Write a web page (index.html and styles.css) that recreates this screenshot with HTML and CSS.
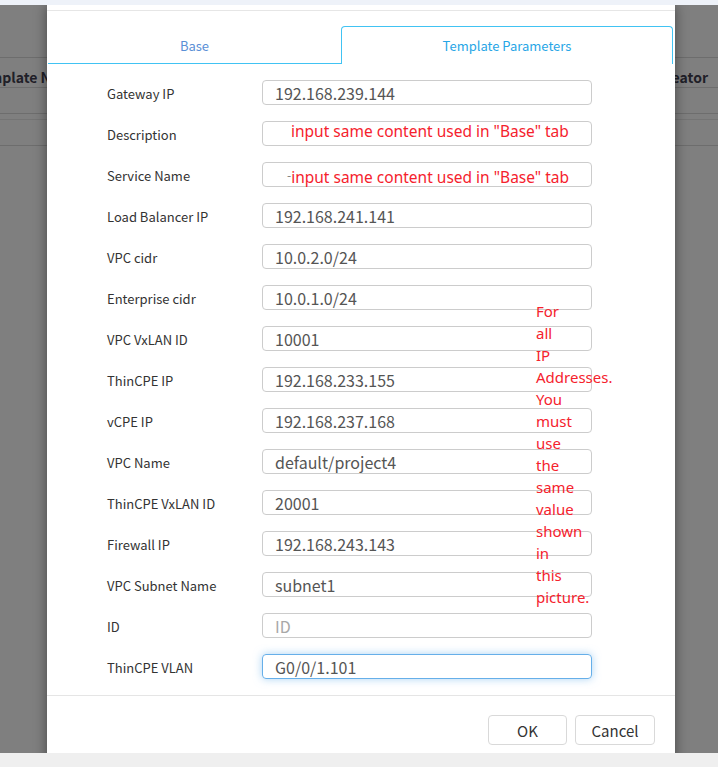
FILE: index.html
```html
<!DOCTYPE html>
<html>
<head>
<meta charset="utf-8">
<link rel="stylesheet" href="styles.css">
</head>
<body>
<div class="topbar"></div>
<div class="stage">
  <div class="bg-table">
    <div class="bg-head">
      <span class="bg-c1">Template Name</span>
      <span class="bg-c2">Creator</span>
    </div>
    <div class="bg-row"></div>
    <div class="bg-gap"></div>
    <div class="bg-row"></div>
  </div>

  <div class="modal">
    <div class="modal-head"></div>
    <div class="tabs">
      <div class="tab">Base</div>
      <div class="tab active">Template Parameters</div>
    </div>
    <div class="form">
      <div class="row"><div class="label">Gateway IP</div><div class="field"><span class="val">192.168.239.144</span></div></div>
      <div class="row"><div class="label">Description</div><div class="field"><span class="note note-up">input same content used in "Base" tab</span></div></div>
      <div class="row"><div class="label">Service Name</div><div class="field"><span class="dash">-</span><span class="note note-down">input same content used in "Base" tab</span></div></div>
      <div class="row"><div class="label">Load Balancer IP</div><div class="field"><span class="val">192.168.241.141</span></div></div>
      <div class="row"><div class="label">VPC cidr</div><div class="field"><span class="val">10.0.2.0/24</span></div></div>
      <div class="row"><div class="label">Enterprise cidr</div><div class="field"><span class="val">10.0.1.0/24</span></div></div>
      <div class="row"><div class="label">VPC VxLAN ID</div><div class="field"><span class="val">10001</span></div></div>
      <div class="row"><div class="label">ThinCPE IP</div><div class="field"><span class="val">192.168.233.155</span></div></div>
      <div class="row"><div class="label">vCPE IP</div><div class="field"><span class="val">192.168.237.168</span></div></div>
      <div class="row"><div class="label">VPC Name</div><div class="field"><span class="val">default/project4</span></div></div>
      <div class="row"><div class="label">ThinCPE VxLAN ID</div><div class="field"><span class="val">20001</span></div></div>
      <div class="row"><div class="label">Firewall IP</div><div class="field"><span class="val">192.168.243.143</span></div></div>
      <div class="row"><div class="label">VPC Subnet Name</div><div class="field"><span class="val">subnet1</span></div></div>
      <div class="row"><div class="label">ID</div><div class="field"><span class="val placeholder">ID</span></div></div>
      <div class="row"><div class="label">ThinCPE VLAN</div><div class="field focus"><span class="val">G0/0/1.101</span></div></div>
    </div>
    <div class="footer">
      <button class="btn btn-ok">OK</button>
      <button class="btn">Cancel</button>
    </div>
    <div class="side-note">For all IP Addresses. You must use the same value shown in this picture.</div>
  </div>
</div>
<div class="bottombar"></div>
</body>
</html>
```

FILE: styles.css
```css
html, body {
  margin: 0;
  padding: 0;
}
body {
  width: 718px;
  height: 767px;
  overflow: hidden;
  background: #efefef;
  font-family: "Noto Sans CJK SC", "Liberation Sans", sans-serif;
}
.topbar {
  height: 5px;
  background: #eef2f9;
}
.stage {
  position: relative;
  height: 748px;
  background: #7f7f7f;
  overflow: hidden;
}
.bottombar {
  height: 14px;
  background: #efefef;
}

/* dimmed background table */
.bg-table {
  padding-top: 52px;
}
.bg-head {
  border-top: 1px solid #6d6d6d;
  border-bottom: 1px solid #6d6d6d;
  display: flex;
  justify-content: space-between;
  align-items: center;
  padding-top: 8px;
  box-sizing: border-box;
  height: 31px;
  font-weight: bold;
  font-size: 14px;
  color: #1f2028;
  white-space: nowrap;
}
.bg-c1 {
  margin-left: -27px;
}
.bg-c2 {
  margin-right: 10px;
}
.bg-row {
  height: 25px;
  border-bottom: 1px solid #6d6d6d;
}
.bg-gap {
  height: 5px;
  border-bottom: 1px solid #747474;
}

/* modal */
.modal {
  position: absolute;
  left: 47px;
  top: 0;
  width: 628px;
  height: 760px;
  background: #fff;
  box-shadow: 0 0 12px rgba(0, 0, 0, 0.45);
  display: flex;
  flex-direction: column;
}
.modal-head {
  height: 5px;
  border-bottom: 1px solid #e6e6e6;
}
.tabs {
  display: flex;
  margin-top: 15px;
  padding: 0 2px 0 1px;
}
.tab {
  height: 38px;
  box-sizing: border-box;
  display: flex;
  align-items: center;
  justify-content: center;
  font-size: 13px;
  color: #5a8fd6;
  flex: 0 0 293px;
  border-bottom: 1px solid #41c3f3;
  padding-top: 1px;
}
.tab.active {
  flex: 1;
  color: #27a6e6;
  border: 1px solid #41c3f3;
  border-bottom: none;
  border-radius: 4px 4px 0 0;
  padding-top: 0;
}
.form {
  padding: 16px 0 16px 0;
  display: flex;
  flex-direction: column;
  gap: 16px;
}
.row {
  display: flex;
  align-items: center;
  height: 25px;
}
.label {
  flex: 0 0 215px;
  padding-left: 60px;
  box-sizing: border-box;
  font-size: 13px;
  color: #333;
  white-space: nowrap;
  padding-top: 1px;
}
.field {
  flex: 0 0 330px;
  height: 25px;
  box-sizing: border-box;
  border: 1px solid #cccccc;
  border-radius: 4px;
  display: flex;
  align-items: center;
  padding-left: 12px;
  font-size: 16px;
  color: #555;
  white-space: nowrap;
}
.field.focus {
  border-color: #66afe9;
  box-shadow: 0 0 8px rgba(102, 175, 233, 0.55);
}
.val {
  line-height: 20px;
}
.placeholder {
  color: #a8a8a8;
}
.dash {
  color: #777;
  font-size: 12px;
  line-height: 12px;
  margin-left: 12px;
}
.note {
  font-family: "Noto Sans", "Open Sans", sans-serif;
  font-size: 15.5px;
  line-height: 18px;
  color: #f5222d;
}
.note-up {
  align-self: flex-start;
  margin-left: 16px;
}
.note-down {
  align-self: flex-end;
  margin-left: 0;
}
.footer {
  border-top: 1px solid #e5e5e5;
  padding: 19px 20px 8px 20px;
  display: flex;
  justify-content: flex-end;
  gap: 8px;
}
.btn {
  height: 30px;
  width: 80px;
  border: 1px solid #d9d9d9;
  border-radius: 4px;
  background: #fff;
  font-family: "Noto Sans CJK SC", "Liberation Sans", sans-serif;
  font-size: 15px;
  color: #333;
  padding: 0;
}
.btn-ok {
  width: 79px;
}
.side-note {
  position: absolute;
  left: 489px;
  top: 295px;
  width: 30px;
  font-family: "Noto Sans", "Open Sans", sans-serif;
  font-size: 15px;
  line-height: 22px;
  color: #f5222d;
}
```
